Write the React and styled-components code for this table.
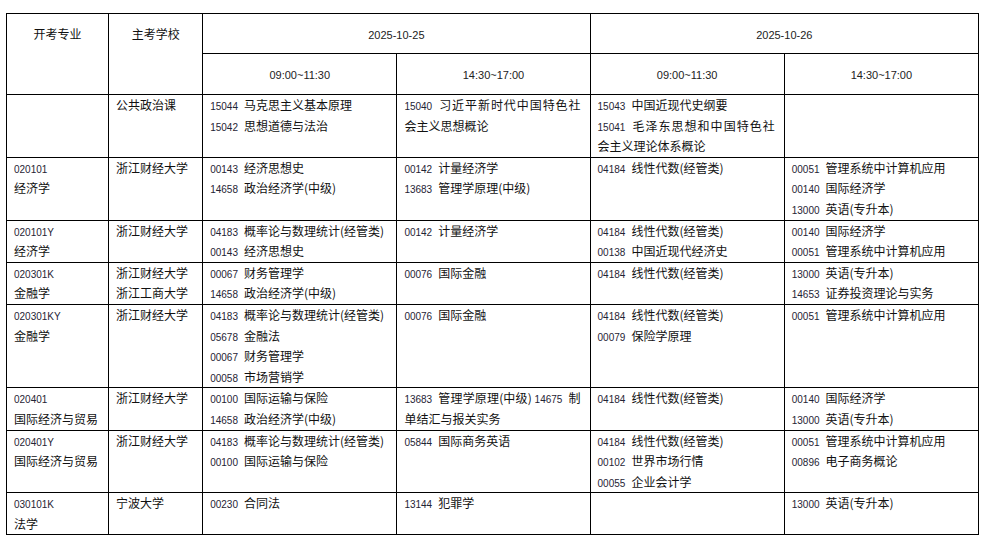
import React from "react";
import styled, { createGlobalStyle } from "styled-components";

const GlobalStyle = createGlobalStyle`
  html, body {
    margin: 0;
    padding: 0;
    background: #ffffff;
  }
  body {
    padding: 13px 0 0 6px;
    font-family: "Noto Sans CJK SC", "Noto Sans", sans-serif;
    color: #111;
  }
`;

const StyledTable = styled.table`
  border-collapse: collapse;
  table-layout: fixed;
  width: 973px;
  font-size: 12px;
`;

const HeadRow = styled.tr`
  height: ${(p) => p.$h}px;
`;

const HeadCell = styled.th`
  border: 1px solid #000;
  font-weight: 400;
  padding: ${(p) => (p.$tall ? "12px 0 0 0" : "0")};
  vertical-align: ${(p) => (p.$tall ? "top" : "middle")};
  text-align: center;
  line-height: 16px;
  font-size: 12px;
`;

const TimeLabel = styled.span`
  font-family: "Liberation Sans", Arial, sans-serif;
  font-size: 11px;
  line-height: 1;
  color: #222;
`;

const Cell = styled.td`
  border: 1px solid #000;
  padding: 0 9px 0 7px;
  vertical-align: top;
  line-height: 20.6px;
  font-size: 12px;
`;

const Line = styled.div`
  line-height: 20.6px;
  word-break: break-all;
  text-align: justify;
`;

const Code = styled.span`
  font-family: "Liberation Sans", Arial, sans-serif;
  font-size: 10px;
  line-height: 1;
  color: #1f2435;
  margin-right: 6px;
`;

const Course = ({ code, name }) => (
  <>
    <Code>{code}</Code>
    {name}
  </>
);

const CourseCell = ({ items }) => (
  <Cell>
    {items.map((it, i) =>
      Array.isArray(it[0]) ? (
        <Line key={i}>
          {it.map((c, j) => (
            <React.Fragment key={j}>
              {j > 0 && " "}
              <Course code={c[0]} name={c[1]} />
            </React.Fragment>
          ))}
        </Line>
      ) : (
        <Line key={i}>
          <Course code={it[0]} name={it[1]} />
        </Line>
      )
    )}
  </Cell>
);

const rows = [
  {
    code: "",
    major: "",
    schools: ["公共政治课"],
    slots: [
      [["15044", "马克思主义基本原理"], ["15042", "思想道德与法治"]],
      [["15040", "习近平新时代中国特色社会主义思想概论"]],
      [["15043", "中国近现代史纲要"], ["15041", "毛泽东思想和中国特色社会主义理论体系概论"]],
      [],
    ],
  },
  {
    code: "020101",
    major: "经济学",
    schools: ["浙江财经大学"],
    slots: [
      [["00143", "经济思想史"], ["14658", "政治经济学(中级)"]],
      [["00142", "计量经济学"], ["13683", "管理学原理(中级)"]],
      [["04184", "线性代数(经管类)"]],
      [["00051", "管理系统中计算机应用"], ["00140", "国际经济学"], ["13000", "英语(专升本)"]],
    ],
  },
  {
    code: "020101Y",
    major: "经济学",
    schools: ["浙江财经大学"],
    slots: [
      [["04183", "概率论与数理统计(经管类)"], ["00143", "经济思想史"]],
      [["00142", "计量经济学"]],
      [["04184", "线性代数(经管类)"], ["00138", "中国近现代经济史"]],
      [["00140", "国际经济学"], ["00051", "管理系统中计算机应用"]],
    ],
  },
  {
    code: "020301K",
    major: "金融学",
    schools: ["浙江财经大学", "浙江工商大学"],
    slots: [
      [["00067", "财务管理学"], ["14658", "政治经济学(中级)"]],
      [["00076", "国际金融"]],
      [["04184", "线性代数(经管类)"]],
      [["13000", "英语(专升本)"], ["14653", "证券投资理论与实务"]],
    ],
  },
  {
    code: "020301KY",
    major: "金融学",
    schools: ["浙江财经大学"],
    slots: [
      [
        ["04183", "概率论与数理统计(经管类)"],
        ["05678", "金融法"],
        ["00067", "财务管理学"],
        ["00058", "市场营销学"],
      ],
      [["00076", "国际金融"]],
      [["04184", "线性代数(经管类)"], ["00079", "保险学原理"]],
      [["00051", "管理系统中计算机应用"]],
    ],
  },
  {
    code: "020401",
    major: "国际经济与贸易",
    schools: ["浙江财经大学"],
    slots: [
      [["00100", "国际运输与保险"], ["14658", "政治经济学(中级)"]],
      [[["13683", "管理学原理(中级)"], ["14675", "制单结汇与报关实务"]]],
      [["04184", "线性代数(经管类)"]],
      [["00140", "国际经济学"], ["13000", "英语(专升本)"]],
    ],
  },
  {
    code: "020401Y",
    major: "国际经济与贸易",
    schools: ["浙江财经大学"],
    slots: [
      [["04183", "概率论与数理统计(经管类)"], ["00100", "国际运输与保险"]],
      [["05844", "国际商务英语"]],
      [["04184", "线性代数(经管类)"], ["00102", "世界市场行情"], ["00055", "企业会计学"]],
      [["00051", "管理系统中计算机应用"], ["00896", "电子商务概论"]],
    ],
  },
  {
    code: "030101K",
    major: "法学",
    schools: ["宁波大学"],
    slots: [
      [["00230", "合同法"]],
      [["13144", "犯罪学"]],
      [],
      [["13000", "英语(专升本)"]],
    ],
  },
];

const App = () => {
  return (
    <>
      <GlobalStyle />
      <StyledTable>
        <colgroup>
          <col style={{ width: 102 }} />
          <col style={{ width: 94 }} />
          <col style={{ width: 194 }} />
          <col style={{ width: 193 }} />
          <col style={{ width: 194 }} />
          <col style={{ width: 194 }} />
        </colgroup>
        <thead>
          <HeadRow $h={40}>
            <HeadCell rowSpan={2} $tall>
              开考专业
            </HeadCell>
            <HeadCell rowSpan={2} $tall>
              主考学校
            </HeadCell>
            <HeadCell colSpan={2}>
              <TimeLabel>2025-10-25</TimeLabel>
            </HeadCell>
            <HeadCell colSpan={2}>
              <TimeLabel>2025-10-26</TimeLabel>
            </HeadCell>
          </HeadRow>
          <HeadRow $h={41}>
            <HeadCell>
              <TimeLabel>09:00~11:30</TimeLabel>
            </HeadCell>
            <HeadCell>
              <TimeLabel>14:30~17:00</TimeLabel>
            </HeadCell>
            <HeadCell>
              <TimeLabel>09:00~11:30</TimeLabel>
            </HeadCell>
            <HeadCell>
              <TimeLabel>14:30~17:00</TimeLabel>
            </HeadCell>
          </HeadRow>
        </thead>
        <tbody>
          {rows.map((row, i) => (
            <tr key={i}>
              <Cell>
                {row.code && (
                  <Line>
                    <Code>{row.code}</Code>
                  </Line>
                )}
                {row.major && <Line>{row.major}</Line>}
              </Cell>
              <Cell>
                {row.schools.map((s) => (
                  <Line key={s}>{s}</Line>
                ))}
              </Cell>
              {row.slots.map((items, j) => (
                <CourseCell key={j} items={items} />
              ))}
            </tr>
          ))}
        </tbody>
      </StyledTable>
    </>
  );
};

export default App;
